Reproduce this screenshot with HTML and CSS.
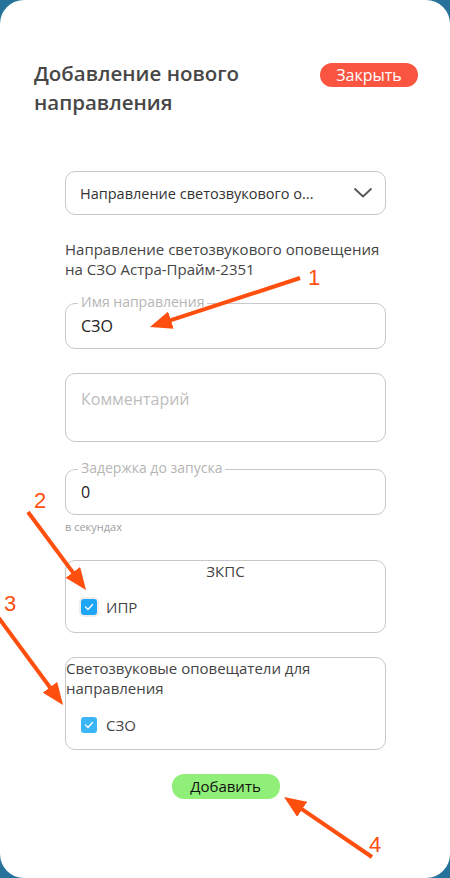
FILE: index.html
```html
<!DOCTYPE html>
<html lang="ru">
<head>
<meta charset="utf-8">
<title>Добавление нового направления</title>
<link rel="stylesheet" href="styles.css">
</head>
<body>
<div class="card">
  <div class="header">
    <h1 class="title">Добавление нового направления</h1>
    <div class="close-btn">Закрыть</div>
  </div>
  <div class="form">
    <div class="select">
      <span class="select-text">Направление светозвукового о...</span>
      <svg class="chevron" width="18" height="10" viewBox="0 0 18 10"><path d="M1 1 L9 8.5 L17 1" fill="none" stroke="#555" stroke-width="1.8" stroke-linecap="round" stroke-linejoin="round"/></svg>
    </div>
    <div class="desc">
      <span class="desc-line">Направление светозвукового оповещения</span>
      <span class="desc-line">на СЗО Астра-Прайм-2351</span>
    </div>
    <div class="field field-name">
      <span class="legend">Имя направления</span>
      <span class="value">СЗО</span>
    </div>
    <div class="field field-comment">
      <span class="placeholder">Комментарий</span>
    </div>
    <div class="field field-delay">
      <span class="legend">Задержка до запуска</span>
      <span class="value">0</span>
    </div>
    <div class="hint">в секундах</div>
    <div class="group group-zkps">
      <div class="group-title centered">ЗКПС</div>
      <div class="check-row">
        <span class="checkbox halo"><svg width="10" height="8" viewBox="0 0 10 8"><path d="M1.5 4 L4 6.5 L8.5 1.5" fill="none" stroke="#fff" stroke-width="1.3" stroke-linecap="round" stroke-linejoin="round"/></svg></span>
        <span class="check-label">ИПР</span>
      </div>
    </div>
    <div class="group group-szo">
      <div class="group-title">Светозвуковые оповещатели для направления</div>
      <div class="check-row">
        <span class="checkbox light"><svg width="10" height="8" viewBox="0 0 10 8"><path d="M1.5 4 L4 6.5 L8.5 1.5" fill="none" stroke="#fff" stroke-width="1.3" stroke-linecap="round" stroke-linejoin="round"/></svg></span>
        <span class="check-label">СЗО</span>
      </div>
    </div>
    <div class="actions">
      <div class="add-btn">Добавить</div>
    </div>
  </div>
  <svg class="annotations" width="450" height="878" viewBox="0 0 450 878">
    <defs>
      <marker id="ah" markerUnits="userSpaceOnUse" markerWidth="22" markerHeight="18" refX="4" refY="9" orient="auto">
        <path d="M0 0 L22 9 L0 18 Z" fill="#ff4f0f"/>
      </marker>
    </defs>
    <g stroke="#ff4f0f" stroke-width="4" fill="none">
      <line x1="300" y1="278" x2="167.1" y2="321.4" marker-end="url(#ah)"/>
      <line x1="28" y1="512" x2="75.3" y2="575.6" marker-end="url(#ah)"/>
      <line x1="-10" y1="606" x2="52.3" y2="690.5" marker-end="url(#ah)"/>
      <line x1="372" y1="857" x2="298.9" y2="807.1" marker-end="url(#ah)"/>
    </g>
    <g class="ann-text" fill="#ff4f0f">
      <text x="308" y="285">1</text>
      <text x="34" y="508">2</text>
      <text x="4" y="611">3</text>
      <text x="369" y="852">4</text>
    </g>
  </svg>
</div>
</body>
</html>
```
FILE: styles.css
```css
html, body {
  margin: 0;
  padding: 0;
}
body {
  background: #27729a;
  font-family: "Open Sans", "Noto Sans", sans-serif;
  color: #444;
}
.card {
  position: relative;
  box-sizing: border-box;
  width: 450px;
  height: 878px;
  background: #fff;
  border-radius: 24px;
  padding: 59px 32px 0 34px;
  overflow: hidden;
}
.header {
  display: flex;
  justify-content: space-between;
  align-items: flex-start;
}
.title {
  margin: 0;
  width: 260px;
  font-size: 20.5px;
  line-height: 29px;
  font-weight: 600;
  color: #474747;
}
.close-btn {
  margin-top: 4px;
  width: 98px;
  height: 24px;
  line-height: 24px;
  border-radius: 12px;
  background: #fa5541;
  color: #fff;
  font-size: 16px;
  text-align: center;
}
.form {
  width: 321px;
  margin: 54px 0 0 31px;
}
.select {
  box-sizing: border-box;
  height: 44px;
  border: 1px solid #c8c8c8;
  border-radius: 10px;
  display: flex;
  align-items: center;
  justify-content: space-between;
  padding: 0 13px 0 14px;
}
.select-text {
  font-size: 14.5px;
  color: #333;
  white-space: nowrap;
}
.desc {
  margin-top: 25px;
  font-size: 15px;
  line-height: 19.5px;
  color: #444;
}
.desc-line {
  display: block;
  width: fit-content;
  white-space: nowrap;
}
.field {
  position: relative;
  box-sizing: border-box;
  border: 1px solid #c8c8c8;
  border-radius: 10px;
  display: flex;
  align-items: center;
  padding: 0 15px;
}
.field-name {
  margin-top: 24px;
  height: 46px;
}
.field-comment {
  margin-top: 24px;
  height: 69px;
  align-items: flex-start;
  padding-top: 14px;
}
.field-delay {
  margin-top: 27px;
  height: 46px;
}
.legend {
  position: absolute;
  top: -11px;
  left: 12px;
  padding: 0 3px;
  background: #fff;
  font-size: 14px;
  line-height: 18px;
  color: #b5b5b5;
}
.value {
  font-size: 16px;
  color: #222;
}
.placeholder {
  font-size: 16px;
  line-height: 22px;
  color: #bdbdbd;
}
.hint {
  margin-top: 5px;
  font-size: 11px;
  line-height: 14px;
  color: #a0a0a0;
}
.group {
  box-sizing: border-box;
  border: 1px solid #c8c8c8;
  border-radius: 10px;
}
.group-zkps {
  margin-top: 26px;
  height: 73px;
}
.group-szo {
  margin-top: 24px;
  height: 93px;
}
.group-title {
  font-size: 15px;
  line-height: 20px;
  color: #444;
}
.group-title.centered {
  text-align: center;
}
.group-zkps .check-row {
  margin-top: 16px;
}
.group-szo .check-row {
  margin-top: 17px;
}
.check-row {
  display: flex;
  align-items: center;
  gap: 9px;
  height: 20px;
  padding-left: 15px;
}
.checkbox {
  width: 16px;
  height: 16px;
  border-radius: 3px;
  background: #1ea6f5;
  display: flex;
  align-items: center;
  justify-content: center;
}
.checkbox.halo {
  box-shadow: 0 0 0 2px #eeeeee;
}
.checkbox.light {
  background: #3ab6f6;
}
.check-label {
  font-size: 15px;
  color: #444;
}
.actions {
  margin-top: 24px;
  display: flex;
  justify-content: center;
}
.add-btn {
  width: 108px;
  height: 25px;
  line-height: 25px;
  border-radius: 12px;
  background: #90ef78;
  color: #111;
  font-size: 15px;
  text-align: center;
}
.annotations {
  position: absolute;
  left: 0;
  top: 0;
  pointer-events: none;
}
.ann-text {
  font-family: "Liberation Sans", Arial, sans-serif;
  font-size: 22px;
}
```
